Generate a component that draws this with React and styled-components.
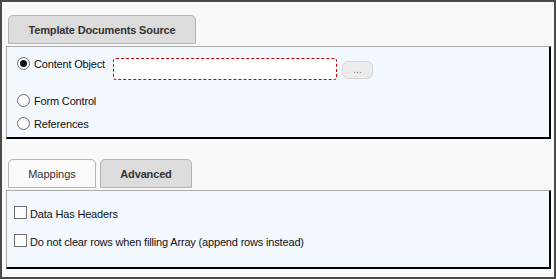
import styled, { createGlobalStyle } from "styled-components";

const GlobalStyle = createGlobalStyle`
  html, body {
    margin: 0;
    padding: 0;
    background: #f9f9f9;
  }
  * { box-sizing: border-box; }
`;

const Frame = styled.div`
  width: 556px;
  height: 279px;
  border: 2px solid #4a4a4a;
  background: #f9f9f9;
  padding: 13px 3px 0 4px;
  font-family: "Liberation Sans", Arial, sans-serif;
  font-size: 11px;
  letter-spacing: -0.17px;
  color: #111;
`;

const TabStrip = styled.div`
  display: flex;
  gap: 4px;
  padding-left: 2px;
  margin-top: ${({ $offset }) => $offset || 0}px;
`;

const Tab = styled.div`
  width: ${({ $width }) => $width}px;
  height: 29px;
  display: flex;
  align-items: center;
  justify-content: center;
  padding-top: 1px;
  border: 1px solid #b4b4b4;
  border-radius: 5px 5px 0 0;
  background: ${({ $active }) => ($active ? "#dcdcdc" : "#fafafa")};
  font-size: 11px;
  letter-spacing: ${({ $active }) => ($active ? "-0.15px" : "0")};
  font-weight: ${({ $active }) => ($active ? 700 : 400)};
  color: #333;
`;

const Panel = styled.div`
  margin-top: 2px;
  background: #f3f8ff;
  border-top: 1px solid #a9a9a9;
  border-left: 1px solid #a9a9a9;
  border-right: 2px solid #000;
  border-bottom: 2px solid #000;
  padding: ${({ $pad }) => $pad};
  display: flex;
  flex-direction: column;
`;

const Row = styled.div`
  display: flex;
  align-items: flex-start;
  margin-top: ${({ $gap }) => $gap || 0}px;
`;

const OptionLabel = styled.label`
  display: flex;
  align-items: center;
  gap: 4px;
  height: 13px;
  width: ${({ $width }) => ($width ? `${$width}px` : "auto")};
  line-height: 13px;
  white-space: nowrap;
`;

const Radio = styled.span`
  position: relative;
  width: 13px;
  height: 13px;
  flex: none;
  border-radius: 50%;
  border: 1px solid #6f6f6f;
  background: radial-gradient(circle at 40% 40%, #ffffff 0%, #f1f1f1 100%);

  &::after {
    content: "";
    display: ${({ $checked }) => ($checked ? "block" : "none")};
    position: absolute;
    left: 2px;
    top: 2px;
    width: 7px;
    height: 7px;
    border-radius: 50%;
    background: #111;
  }
`;

const Checkbox = styled.span`
  width: 13px;
  height: 13px;
  flex: none;
  border: 1px solid #6f6f6f;
  background: #fff;
`;

const LabelText = styled.span`
  padding-top: 2px;
`;

const PathInput = styled.div`
  width: 224px;
  height: 22px;
  margin-top: 1px;
  background: #fff;
  border: 1px dashed #c40000;
  border-radius: 3px;
`;

const BrowseButton = styled.button`
  width: 31px;
  height: 18px;
  margin: 4px 0 0 5px;
  padding: 0 0 3px;
  border: 1px solid #d6d6d6;
  border-radius: 6px;
  background: #ececec;
  color: #777;
  font-family: "Liberation Sans", Arial, sans-serif;
  font-size: 10px;
  line-height: 1;
  display: flex;
  align-items: flex-end;
  justify-content: center;
`;

const CheckRow = styled.label`
  display: flex;
  align-items: center;
  gap: 3px;
  height: 13px;
  margin-top: ${({ $gap }) => $gap || 0}px;
  white-space: nowrap;
`;

export default function App() {
  return (
    <>
      <GlobalStyle />
      <Frame>
        <TabStrip>
          <Tab $width={188} $active>
            Template Documents Source
          </Tab>
        </TabStrip>
        <Panel $pad="10px 0 7px 10px">
          <Row>
            <OptionLabel $width={96}>
              <Radio $checked />
              <LabelText>Content Object</LabelText>
            </OptionLabel>
            <PathInput />
            <BrowseButton>...</BrowseButton>
          </Row>
          <Row $gap={14}>
            <OptionLabel>
              <Radio />
              <LabelText>Form Control</LabelText>
            </OptionLabel>
          </Row>
          <Row $gap={10}>
            <OptionLabel>
              <Radio />
              <LabelText>References</LabelText>
            </OptionLabel>
          </Row>
        </Panel>

        <TabStrip $offset={20}>
          <Tab $width={88}>Mappings</Tab>
          <Tab $width={92} $active>
            Advanced
          </Tab>
        </TabStrip>
        <Panel $pad="15px 0 20px 7px">
          <CheckRow>
            <Checkbox />
            <LabelText>Data Has Headers</LabelText>
          </CheckRow>
          <CheckRow $gap={15}>
            <Checkbox />
            <LabelText>
              Do not clear rows when filling Array (append rows instead)
            </LabelText>
          </CheckRow>
        </Panel>
      </Frame>
    </>
  );
}
